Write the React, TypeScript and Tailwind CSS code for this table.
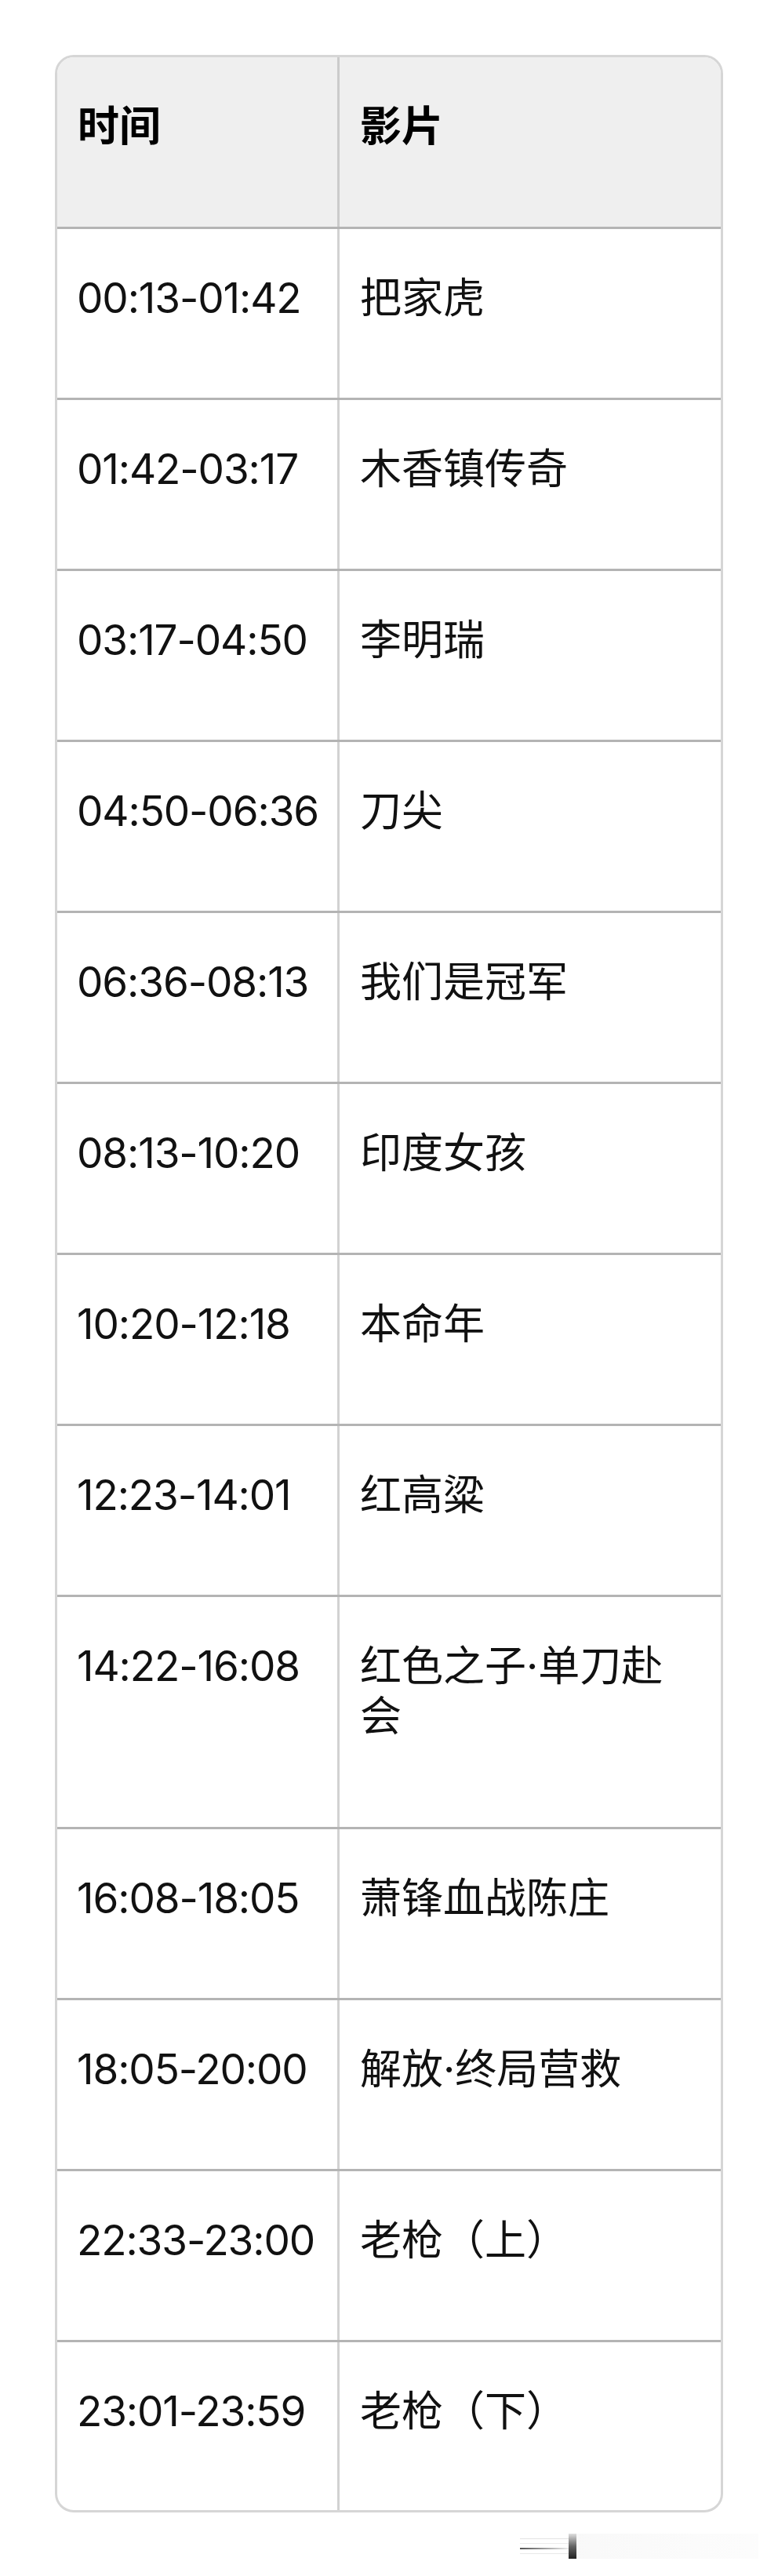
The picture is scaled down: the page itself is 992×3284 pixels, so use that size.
import React from "react";

const rows: { time: string; title: string; h: string; last?: boolean }[] = [
  { time: "00:13-01:42", title: "把家虎", h: "h-[218px]" },
  { time: "01:42-03:17", title: "木香镇传奇", h: "h-[218px]" },
  { time: "03:17-04:50", title: "李明瑞", h: "h-[218px]" },
  { time: "04:50-06:36", title: "刀尖", h: "h-[218px]" },
  { time: "06:36-08:13", title: "我们是冠军", h: "h-[218px]" },
  { time: "08:13-10:20", title: "印度女孩", h: "h-[218px]" },
  { time: "10:20-12:18", title: "本命年", h: "h-[218px]" },
  { time: "12:23-14:01", title: "红高粱", h: "h-[218px]" },
  { time: "14:22-16:08", title: "红色之子·单刀赴会", h: "h-[296px]" },
  { time: "16:08-18:05", title: "萧锋血战陈庄", h: "h-[218px]" },
  { time: "18:05-20:00", title: "解放·终局营救", h: "h-[218px]" },
  { time: "22:33-23:00", title: "老枪（上）", h: "h-[218px]" },
  { time: "23:01-23:59", title: "老枪（下）", h: "h-[214px]", last: true },
];

export default function App() {
  return (
    <div
      className="bg-white min-h-[3284px] pl-[70px] pt-[70px] text-[#111111]"
      style={{ fontFamily: "Inter, 'Noto Sans CJK SC', sans-serif" }}
    >
      <div className="w-[852px] border-[3px] border-[#d6d6d6] rounded-[24px] overflow-hidden">
        <div className="grid grid-cols-[357px_1fr] h-[219px] bg-[#efefef] border-b-[3px] border-[#b4b4b4] text-[53px] leading-[64px] font-bold text-black">
          <div className="pl-[26px] pt-[56px]">时间</div>
          <div className="pl-[26px] pt-[56px] border-l-[3px] border-[#cbcbcb]">影片</div>
        </div>
        {rows.map((r) => (
          <div
            key={r.time}
            className={`grid grid-cols-[357px_1fr] ${r.h} text-[53px] leading-[64px] ${
              r.last ? "" : "border-b-[3px] border-[#b4b4b4]"
            }`}
          >
            <div className="pl-[25px] pt-[56px] whitespace-nowrap tracking-[-1.1px]">{r.time}</div>
            <div className="pl-[26px] pr-[40px] pt-[56px] border-l-[3px] border-[#d2d2d2]">{r.title}</div>
          </div>
        ))}
      </div>
      <div className="ml-[593px] mt-[27px] flex items-stretch h-[32px] w-[304px]">
        <div className="w-[62px] flex flex-col justify-between py-[6px]">
          <div className="h-[1px] bg-[#e4e4e4]" />
          <div className="h-[1px] bg-[#ececec]" />
          <div className="h-[2px] bg-gradient-to-r from-[#555555] to-[#eeeeee]" />
          <div className="h-[1px] bg-[#e8e8e8]" />
        </div>
        <div className="w-[10px] bg-gradient-to-b from-[#e0e0e0] via-[#666666] to-[#222222]" />
        <div className="flex-1 bg-gradient-to-r from-[#f6f6f6] to-[#fbfbfb] opacity-70" />
      </div>
    </div>
  );
}
